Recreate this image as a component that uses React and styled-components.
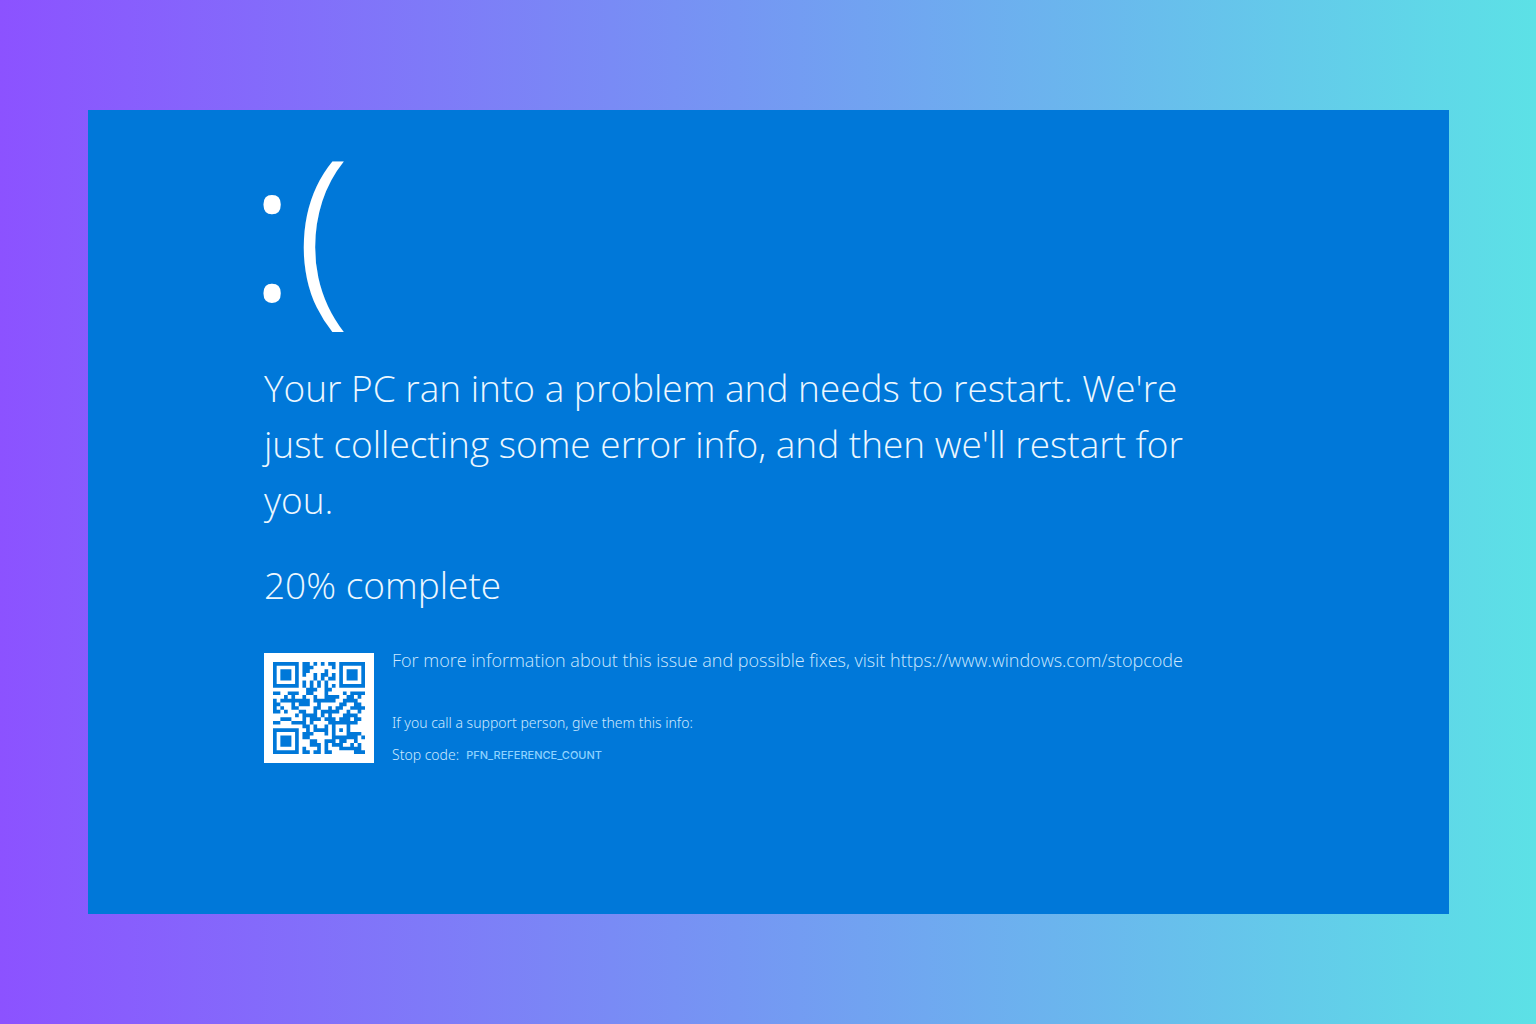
import React from "react";
import styled, { createGlobalStyle } from "styled-components";

const GlobalStyle = createGlobalStyle`
  *, *::before, *::after { box-sizing: border-box; }
  body {
    margin: 0;
    font-family: "Open Sans", "Noto Sans", sans-serif;
    font-weight: 300;
  }
`;

const Backdrop = styled.div`
  display: flex;
  min-height: 100vh;
  padding: 110px 87px 110px 88px;
  background: linear-gradient(90deg, #8c52ff 0%, #5ce1e6 100%);
`;

const Screen = styled.main`
  flex: 1;
  padding: 2px 176px 120px;
  background: #0078d9;
  color: #ecf7ff;
`;

const Face = styled.div`
  margin: 0 0 22px -16px;
  font-family: "Noto Sans", sans-serif;
  font-size: 196px;
  line-height: 226px;
  color: #ffffff;
`;

const Message = styled.h1`
  max-width: 940px;
  margin: 0 0 29px;
  font-size: 37px;
  font-weight: 300;
  line-height: 56px;
`;

const Progress = styled.p`
  margin: 0;
  font-size: 37px;
  line-height: 56px;
`;

const Details = styled.section`
  display: flex;
  gap: 18px;
  margin-top: 40px;
`;

const QrFrame = styled.div`
  flex: none;
  width: 110px;
  height: 110px;
  padding: 9px;
  background: #ffffff;
`;

const QrImage = styled.svg`
  display: block;
  width: 92px;
  height: 92px;
  fill: #0078d9;
`;

const Info = styled.div`
  display: flex;
  flex-direction: column;
  color: #cde8ff;
`;

const MoreInfo = styled.p`
  margin: 0 0 40px;
  font-size: 18px;
  line-height: 14px;
`;

const StopLink = styled.a`
  color: inherit;
  text-decoration: none;
`;

const Support = styled.p`
  display: flex;
  align-items: center;
  gap: 7px;
  margin: 0;
  font-family: "Noto Sans", sans-serif;
  font-size: 14px;
  line-height: 32px;
`;

const StopCode = styled.span`
  font-family: Inter, sans-serif;
  font-size: 11px;
  font-weight: 500;
  color: #8fd3ff;
`;

/* QR encoder: version 2, error correction level L, byte mode, mask 4 */
const SIZE = 25;
const DATA_CODEWORDS = 34;
const EC_CODEWORDS = 10;
const FORMAT_BITS = "110011000101111";

const EXP = [];
const LOG = [];
for (let i = 0, x = 1; i < 255; i++) {
  EXP[i] = x;
  LOG[x] = i;
  x <<= 1;
  if (x & 256) x ^= 0x11d;
}
const multiply = (a, b) => (a && b ? EXP[(LOG[a] + LOG[b]) % 255] : 0);

function errorCorrection(data) {
  let generator = [1];
  for (let i = 0; i < EC_CODEWORDS; i++) {
    const next = Array(generator.length + 1).fill(0);
    generator.forEach((c, j) => {
      next[j] ^= c;
      next[j + 1] ^= multiply(c, EXP[i]);
    });
    generator = next;
  }
  const rest = [...data, ...Array(EC_CODEWORDS).fill(0)];
  for (let i = 0; i < data.length; i++) {
    const factor = rest[i];
    generator.forEach((c, j) => {
      rest[i + j] ^= multiply(c, factor);
    });
  }
  return rest.slice(data.length);
}

function codewordBits(text) {
  const bits = [];
  const push = (value, count) => {
    for (let i = count - 1; i >= 0; i--) bits.push((value >> i) & 1);
  };
  push(4, 4);
  push(text.length, 8);
  for (const ch of text) push(ch.charCodeAt(0), 8);
  push(0, 4);
  while (bits.length % 8) bits.push(0);
  const data = [];
  for (let i = 0; i < bits.length; i += 8) {
    data.push(parseInt(bits.slice(i, i + 8).join(""), 2));
  }
  for (let pad = 0xec; data.length < DATA_CODEWORDS; pad ^= 0xfd) data.push(pad);
  return [...data, ...errorCorrection(data)].flatMap((byte) =>
    [7, 6, 5, 4, 3, 2, 1, 0].map((i) => (byte >> i) & 1)
  );
}

function placeFinder(grid, top, left) {
  for (let r = -1; r < 8; r++) {
    for (let c = -1; c < 8; c++) {
      const y = top + r;
      const x = left + c;
      if (y < 0 || x < 0 || y >= SIZE || x >= SIZE) continue;
      const ring = Math.max(Math.abs(r - 3), Math.abs(c - 3));
      grid[y][x] = ring === 3 || ring <= 1 ? 1 : 0;
    }
  }
}

function qrPath(text) {
  const bits = codewordBits(text);
  const grid = Array.from({ length: SIZE }, () => Array(SIZE).fill(null));
  placeFinder(grid, 0, 0);
  placeFinder(grid, 0, 18);
  placeFinder(grid, 18, 0);
  for (let r = -2; r <= 2; r++) {
    for (let c = -2; c <= 2; c++) {
      grid[18 + r][18 + c] = Math.max(Math.abs(r), Math.abs(c)) === 1 ? 0 : 1;
    }
  }
  for (let i = 8; i < 17; i++) grid[6][i] = grid[i][6] = i % 2 ? 0 : 1;

  const format = FORMAT_BITS.split("").map(Number);
  const steps = [0, 1, 2, 3, 4, 5, 7, 8];
  steps.forEach((col, i) => (grid[8][col] = format[i]));
  [7, 5, 4, 3, 2, 1, 0].forEach((row, i) => (grid[row][8] = format[8 + i]));
  for (let i = 0; i < 7; i++) grid[24 - i][8] = format[i];
  for (let i = 7; i < 15; i++) grid[8][10 + i] = format[i];
  grid[17][8] = 1;

  let k = 0;
  let up = true;
  for (let right = 24; right > 0; right -= 2) {
    if (right === 6) right = 5;
    for (let j = 0; j < SIZE; j++) {
      const y = up ? SIZE - 1 - j : j;
      for (const x of [right, right - 1]) {
        if (grid[y][x] !== null) continue;
        const flip = (Math.floor(y / 2) + Math.floor(x / 3)) % 2 === 0 ? 1 : 0;
        grid[y][x] = (bits[k++] || 0) ^ flip;
      }
    }
    up = !up;
  }
  return grid
    .flatMap((row, y) => row.map((on, x) => (on ? `M${x} ${y}h1v1h-1z` : "")))
    .join("");
}

const STOP_URL = "https://www.windows.com/stopcode";
const QR_PATH = qrPath(STOP_URL);

export default function App() {
  return (
    <>
      <GlobalStyle />
      <Backdrop>
        <Screen>
          <Face>:(</Face>
          <Message>
            Your PC ran into a problem and needs to restart. We're just
            collecting some error info, and then we'll restart for you.
          </Message>
          <Progress>20% complete</Progress>
          <Details>
            <QrFrame>
              <QrImage viewBox="0 0 25 25" role="img" aria-label="QR code">
                <path d={QR_PATH} />
              </QrImage>
            </QrFrame>
            <Info>
              <MoreInfo>
                For more information about this issue and possible fixes, visit{" "}
                <StopLink href={STOP_URL}>{STOP_URL}</StopLink>
              </MoreInfo>
              <Support>If you call a support person, give them this info:</Support>
              <Support>
                Stop code: <StopCode>PFN_REFERENCE_COUNT</StopCode>
              </Support>
            </Info>
          </Details>
        </Screen>
      </Backdrop>
    </>
  );
}
